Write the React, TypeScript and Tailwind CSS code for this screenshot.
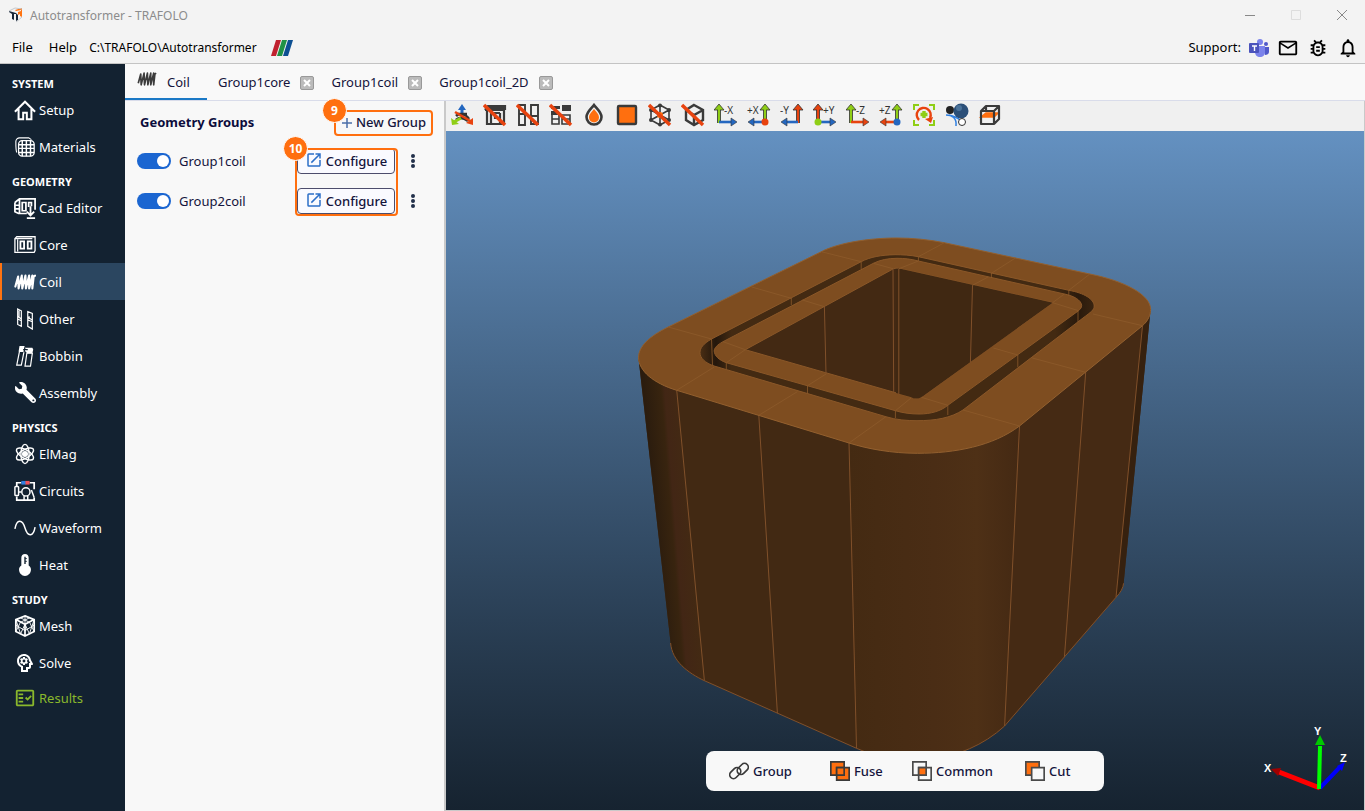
import { useState, type ReactNode } from 'react';
import {
  MdMailOutline,
  MdNotificationsNone,
  MdOpenInNew,
  MdOutlineBugReport,
  MdOutlineFactCheck,
  MdOutlinePsychology,
} from 'react-icons/md';
import { FaWrench } from 'react-icons/fa';

function Icon({ children, className = 'size-[22px]' }: { children: ReactNode; className?: string }) {
  return (
    <svg
      viewBox="0 0 24 24"
      className={className}
      fill="none"
      stroke="currentColor"
      strokeWidth="1.6"
      aria-hidden="true"
    >
      {children}
    </svg>
  );
}

const coilPath = 'M1.500 17L4.500 6L5 19L8.500 5L9 19L12.500 5L13 19L16.500 5L16.500 19L20 5L20 19L21.500 6L23 5';

const icons = {
  setup: (
    <Icon>
      <path d="M1 14 12 3l11 11M5 11v11h5v-7h4v7h5V11" strokeWidth="2.2" />
    </Icon>
  ),
  materials: (
    <Icon>
      <rect x="5" y="5" width="17" height="17" rx="4" strokeWidth="1.4" />
      <path d="M3 18c-1-2-1-9-1-12 0-2 2-4 4-4h10l3 2" strokeWidth="1.2" />
      <path d="M9 5v17M13.500 5v17M18 5v17M5 9.500h17M5 13.500h17M5 18h17" strokeWidth="1.600" />
    </Icon>
  ),
  cad: (
    <Icon className="size-6">
      <path d="M1 6l5-4h17v12M6 2v16M1 6v10l4 2h9M1 9h5M1 13h5" strokeWidth="1.900" />
      <path d="M9 6h4v9H9zM16 11V6h3v4" strokeWidth="1.900" />
      <path d="M18 10v10m-4-4 4 4 4-4M14 23h9" strokeWidth="2" />
    </Icon>
  ),
  core: (
    <Icon>
      <path d="M1 5l2-2h20v15l-1 2H1z" strokeWidth="1.400" />
      <path d="M4 6v13M1 5h19" strokeWidth="1.300" />
      <path d="M7 8h4v8H7zM15 8h4v8h-4z" strokeWidth="2" />
    </Icon>
  ),
  coil: (
    <Icon>
      <path d={coilPath} strokeWidth="2.300" strokeLinecap="round" strokeLinejoin="round" />
    </Icon>
  ),
  other: (
    <Icon>
      <path
        d="M4 1l4 2v17l-4-2zM4 9l4 3M4 12l4 2M5.500 2v8M15 4l5 2v17l-5-3zM15 13l5 2M16.500 12v-3M15 10l5 3"
        strokeWidth="1.300"
      />
    </Icon>
  ),
  bobbin: (
    <Icon>
      <path d="M6 7h5L8 22H3zM14 9h6l-2 14h-6z" strokeWidth="1.300" />
      <path d="M6 1h5l2 2h7l1 2-1 4h-6l-1-2H5z" fill="currentColor" stroke="none" />
      <path d="M10 5l5 0M12 2l-1 6" stroke="#132231" strokeWidth="1.400" />
    </Icon>
  ),
  assembly: <FaWrench className="size-[21px] -scale-x-100" />,
  elmag: (
    <Icon>
      <ellipse cx="12" cy="12" rx="4.500" ry="10.500" />
      <ellipse cx="12" cy="12" rx="4.500" ry="10.500" transform="rotate(60 12 12)" />
      <ellipse cx="12" cy="12" rx="4.500" ry="10.500" transform="rotate(-60 12 12)" />
      <circle cx="12" cy="12" r="2.500" fill="currentColor" />
    </Icon>
  ),
  circuits: (
    <Icon>
      <path d="M8 3H3v4M17 3h5v7M3 18v4h19v-3" strokeWidth="1.900" />
      <rect x="1" y="7" width="4" height="10" rx="1" />
      <circle cx="13" cy="13" r="4.500" />
      <path d="M11 17v5M15 17v5M19 11l3 8M8 13h-3" />
      <path d="M8 3h5" stroke="#2f7fe0" strokeWidth="4" />
      <path d="M12.500 3H17" stroke="#f0525a" strokeWidth="4" />
    </Icon>
  ),
  waveform: (
    <Icon>
      <path d="M1 13C3 2 9 2 12 12s9 10 11-1" strokeWidth="1.600" />
    </Icon>
  ),
  heat: (
    <Icon>
      <path
        d="M12 0c2.500 0 4 1.500 4 4v8.500c1.500 1 2.500 2.500 2.500 4.500 0 4-3 7-6.500 7s-6.500-3-6.500-7c0-2 1-3.500 2.500-4.500V4c0-2.500 1.500-4 4-4z"
        fill="currentColor"
        stroke="none"
      />
      <path d="M12 3v8" stroke="#132231" strokeWidth="1.500" />
      <path d="M12 5h2M12 8h2" stroke="#132231" strokeWidth="1" />
    </Icon>
  ),
  mesh: (
    <Icon className="size-6">
      <path d="M12 1l10 4v13l-10 5-10-5V5zM2 5l10 5 10-5M12 10v13" strokeWidth="1.900" />
      <path
        d="M7 3l10 5M17 3L7 8M12 1v9M2 5l5 15M7 8L2 18M2 11l10 6M12 10l-5 11M22 5l-5 15M17 8l5 10M22 11l-10 6M12 10l5 11"
        strokeWidth="1"
      />
    </Icon>
  ),
  solve: <MdOutlinePsychology className="size-6 shrink-0 -scale-x-100" />,
  results: <MdOutlineFactCheck className="size-[22px]" />,
};

type IconName = keyof typeof icons;

const sections: { title: string; items: [string, IconName][] }[] = [
  { title: 'SYSTEM', items: [['Setup', 'setup'], ['Materials', 'materials']] },
  {
    title: 'GEOMETRY',
    items: [
      ['Cad Editor', 'cad'],
      ['Core', 'core'],
      ['Coil', 'coil'],
      ['Other', 'other'],
      ['Bobbin', 'bobbin'],
      ['Assembly', 'assembly'],
    ],
  },
  {
    title: 'PHYSICS',
    items: [['ElMag', 'elmag'], ['Circuits', 'circuits'], ['Waveform', 'waveform'], ['Heat', 'heat']],
  },
  { title: 'STUDY', items: [['Mesh', 'mesh'], ['Solve', 'solve'], ['Results', 'results']] },
];

function TitleBar() {
  return (
    <div className="flex h-[30px] shrink-0 items-center pl-2 text-[12px] text-[#8c8c8c]">
      <svg viewBox="0 0 16 16" className="size-4" aria-hidden="true">
        <path d="M1 4l7 2v1L6 7v6L4 12V7L1 5z" fill="#17273a" />
        <path d="M8 6l2 2v5l-2 1z" fill="#17273a" />
        <path d="M7 3l7-2v9l-2-1V7l-2 1V5l3-1V3L8 4z" fill="#ff7310" />
        <path d="M1 4l6-3 7 1M14 10l-6 5" stroke="#c5c8cc" fill="none" />
      </svg>
      <span className="ml-[6px] flex-1 pt-[2px]">Autotransformer - TRAFOLO</span>
      <button className="flex h-full w-[46px] items-center justify-center" aria-label="Minimize">
        <svg viewBox="0 0 12 12" className="size-3"><path d="M1 6.500h10" stroke="#888" /></svg>
      </button>
      <button className="flex h-full w-[46px] items-center justify-center" aria-label="Maximize">
        <svg viewBox="0 0 12 12" className="size-3"><path d="M1.500 1.500h9v9h-9z" stroke="#ddd" fill="none" /></svg>
      </button>
      <button className="flex h-full w-[46px] items-center justify-center" aria-label="Close">
        <svg viewBox="0 0 12 12" className="size-3"><path d="M1 1l10 10M11 1L1 11" stroke="#888" /></svg>
      </button>
    </div>
  );
}

function MenuBar() {
  return (
    <div className="flex h-[34px] shrink-0 items-center border-b border-[#c4c4c4] pt-[2px] pr-[6px] pl-3 text-black">
      <button>File</button>
      <button className="ml-4">Help</button>
      <span className="ml-3 text-[12px]">C:\TRAFOLO\Autotransformer</span>
      <svg viewBox="0 0 22 16" className="ml-[14px] h-4 w-[22px]" aria-hidden="true">
        <path d="M5 0h5L5 16H0z" fill="#c0222f" />
        <path d="M11 0h5l-5 16H6z" fill="#209245" />
        <path d="M17 0h5l-5 16h-5z" fill="#0d4f92" />
      </svg>
      <div className="ml-auto flex items-center gap-2">
        <span>Support:</span>
        <button aria-label="Teams">
          <svg viewBox="0 0 20 18" className="h-[18px] w-5" aria-hidden="true">
            <circle cx="17" cy="5" r="2" fill="#5059c9" />
            <path d="M14 8h6v5c0 2-2 3-4 3z" fill="#5059c9" />
            <circle cx="11" cy="3" r="3" fill="#7b83eb" />
            <path d="M6 7h10v6c0 3-2 5-5 5s-5-2-5-5z" fill="#7b83eb" />
            <rect y="4" width="10" height="10" rx="1" fill="#4b53bc" />
            <path d="M3 7h5M5.500 7v5" stroke="#fff" strokeWidth="1.400" />
          </svg>
        </button>
        <button aria-label="Mail"><MdMailOutline className="size-[22px]" /></button>
        <button aria-label="Report a bug"><MdOutlineBugReport className="size-[22px]" /></button>
        <button aria-label="Notifications"><MdNotificationsNone className="size-[22px]" /></button>
      </div>
    </div>
  );
}

function Sidebar() {
  return (
    <nav className="w-[125px] shrink-0 overflow-y-auto bg-[#132231] pt-[3px] text-white">
      {sections.map((section) => (
        <div key={section.title}>
          <h2 className="h-6 pt-[9px] pl-3 text-[11px] leading-[15px] font-bold">{section.title}</h2>
          {section.items.map(([label, icon]) => {
            const active = label === 'Coil';
            return (
              <button
                key={label}
                aria-current={active ? 'page' : undefined}
                className={`flex h-[37px] w-full items-center gap-[3px] border-l-2 pl-3 ${
                  active ? 'border-[#ff7310] bg-[#2b4660]' : 'border-transparent'
                } ${label === 'Results' ? 'pb-1 text-[#8ab82c]' : ''}`}
              >
                <span className="flex w-[22px] items-center justify-center">{icons[icon]}</span>
                <span className="pt-[2px]">{label}</span>
              </button>
            );
          })}
        </div>
      ))}
    </nav>
  );
}

function Tabs() {
  return (
    <div role="tablist" className="flex h-[37px] shrink-0 border-b border-[#d9dcea] bg-[#f9f9f9] text-[#14143c]">
      <button role="tab" aria-selected="true" className="flex w-[82px] items-center border-b-2 border-[#1b79c6] pl-3">
        <Icon className="mb-1 size-5 text-[#3c3c3c]">
          <path d={coilPath} strokeWidth="2" strokeLinejoin="round" />
        </Icon>
        <span className="ml-[10px] pt-[3px]">Coil</span>
      </button>
      {['Group1core', 'Group1coil', 'Group1coil_2D'].map((name) => (
        <div key={name} className="flex items-center pt-[2px] pr-[6px] pl-[11px]">
          <button role="tab" aria-selected="false">{name}</button>
          <button
            aria-label={`Close ${name}`}
            className="ml-[10px] flex size-[14px] items-center justify-center rounded-xs border border-[#999] bg-[#bbb]"
          >
            <svg viewBox="0 0 8 8" className="size-2"><path d="M1 1l6 6M7 1L1 7" stroke="#fff" strokeWidth="2" /></svg>
          </button>
        </div>
      ))}
    </div>
  );
}

function Callout({ n }: { n: number }) {
  return (
    <span className="absolute -top-[14px] -left-[14px] flex size-[25px] items-center justify-center rounded-full border border-white bg-[#ff6f0f] text-[12px] font-bold text-white">
      {n}
    </span>
  );
}

function GroupRow({ name }: { name: string }) {
  const [on, setOn] = useState(true);
  return (
    <div className="flex h-10 items-center">
      <label className="flex items-center gap-2 text-[#14143c]">
        <input
          type="checkbox"
          role="switch"
          checked={on}
          onChange={() => setOn(!on)}
          className="flex h-4 w-[34px] appearance-none items-center rounded-full bg-[#b0b0b0] px-[2px] before:size-3 before:rounded-full before:bg-white checked:justify-end checked:bg-[#1b66d1]"
        />
        <span className="pt-[2px]">{name}</span>
      </label>
      <button className="ml-auto flex h-[26px] w-[98px] items-center justify-center gap-[3px] rounded border border-[#4d4d6c] bg-[#fafaff] font-medium text-[#14143c]">
        <MdOpenInNew className="mb-[2px] size-[18px] text-[#2c6fc8]" />
        <span className="pt-[2px]">Configure</span>
      </button>
      <button aria-label={`${name} options`} className="ml-2 flex h-6 w-5 items-center justify-center">
        <svg viewBox="0 0 4 16" className="h-4 w-1" fill="#22304a">
          <circle cx="2" cy="3" r="2" />
          <circle cx="2" cy="8" r="2" />
          <circle cx="2" cy="13" r="2" />
        </svg>
      </button>
    </div>
  );
}

function GroupsPanel() {
  return (
    <aside className="w-[321px] shrink-0 border-r-2 border-[#c9c9c9] bg-[#f8f8f8] pr-[21px] pl-3">
      <div className="-mr-[10px] flex h-10 items-center justify-between pt-1 pl-[3px]">
        <h1 className="font-bold text-[#0c0c3c]">Geometry Groups</h1>
        <div className="relative rounded border-2 border-[#ff6f0f]">
          <button className="flex h-[22px] items-center gap-[3px] px-[5px] font-medium text-[#14143c]">
            <svg viewBox="0 0 12 12" className="size-3"><path d="M6 1v10M1 6h10" stroke="#4a6ea8" strokeWidth="1.500" /></svg>
            New Group
          </button>
          <Callout n={9} />
        </div>
      </div>
      <div className="relative">
        <GroupRow name="Group1coil" />
        <GroupRow name="Group2coil" />
        <div className="pointer-events-none absolute top-[7px] right-[25px] h-[68px] w-[103px] rounded border-2 border-[#ff6f0f]">
          <Callout n={10} />
        </div>
      </div>
    </aside>
  );
}

const slash = <path d="M1 2l21 20" stroke="#e8430f" strokeWidth="3.400" />;

// Two-arrow gizmos: the upright arrow sits left or right and the flat one points away from it.
function ViewIcon({ label, flip, up, flat, dot }: { label: string; flip?: boolean; up: string; flat: string; dot?: string }) {
  const x = flip ? 18 : 5;
  return (
    <svg viewBox="0 0 24 24" className="size-6" aria-hidden="true">
      <path d={`M${x} 20V5`} stroke="#333" strokeWidth="3.800" />
      <path d={`M${x - 5} 7l5-6 5 6z`} fill={up} stroke="#333" strokeWidth=".8" />
      <path d={`M${x} 20V5`} stroke={up} strokeWidth="2.200" />
      <path d={flip ? 'M18 19H6' : 'M5 19h13'} stroke={flat} strokeWidth="2.600" />
      <path d={flip ? 'M7 15l-6 4 6 4z' : 'M17 15l6 4-6 4z'} fill={flat} stroke="#333" strokeWidth=".6" />
      {dot && <circle cx={x} cy="19" r="3.500" fill={dot} />}
      <text x={flip ? 0 : 10} y="11" fontSize="10" fill="#333" fontFamily="Noto Sans, sans-serif">
        {label}
      </text>
    </svg>
  );
}

const green = '#8fce16';
const blue = '#2467c0';
const red = '#e8430f';

const tools: { name: string; icon: ReactNode }[] = [
  {
    name: 'Hide axes',
    icon: (
      <Icon className="size-6">
        <path d="M12 13V5" stroke={blue} strokeWidth="3" />
        <path d="M8 7l4-6 4 6z" fill={blue} stroke="none" />
        <path d="M6 13c3-3 9-3 13 3M6 17c3-3 7-3 12 1M8 11l9 0" stroke="#333" strokeWidth="2.500" />
        <path d="M11 15l-7 4" stroke={green} strokeWidth="3" />
        <path d="M1 15l1 7 7-1z" fill={green} stroke="none" />
        <path d="M5 9l17 10" stroke={red} strokeWidth="2.600" />
        <path d="M23 15l0 7-7-2z" fill={red} stroke="none" />
      </Icon>
    ),
  },
  {
    name: 'Hide core',
    icon: (
      <Icon className="size-6">
        <path d="M2 7l3-4h17v4M2 7h20M4 7v14h17V7M8 10v11M12 10v6M17 10v11M8 10h9M5 5h17" stroke="#3a3a3a" strokeWidth="2.200" />
        {slash}
      </Icon>
    ),
  },
  {
    name: 'Hide other parts',
    icon: (
      <Icon className="size-6">
        <path d="M3 2h6v20H3zM15 2h7v19h-7zM3 11h6M15 13h7" stroke="#3a3a3a" strokeWidth="1.900" />
        {slash}
      </Icon>
    ),
  },
  {
    name: 'Hide bobbin',
    icon: (
      <Icon className="size-6">
        <path d="M3 11h7v10H3zM13 12h8v9h-8zM3 16h7M13 16h8" stroke="#3a3a3a" />
        <path d="M2 3h9v3H2zM13 2h9v6h-9zM2 8h8v4H2z" fill="#3a3a3a" stroke="none" />
        {slash}
      </Icon>
    ),
  },
  {
    name: 'Opacity',
    icon: (
      <Icon className="size-6">
        <path d="M12 2c-3 4-7.500 7-7.500 12a7.500 7.500 0 0015 0c0-5-4.500-8-7.500-12z" stroke="#3a3a3a" strokeWidth="2.600" />
        <path d="M12 6c-2 3-5 5-5 8.500a5 5 0 0010 0c0-3.500-3-5.500-5-8.500z" fill="#ff6f0f" stroke="none" />
      </Icon>
    ),
  },
  {
    name: 'Surface',
    icon: (
      <Icon className="size-6">
        <rect x="3" y="3" width="18" height="18" rx="1" fill="#ff6f0f" stroke="#3a3a3a" strokeWidth="2.400" />
      </Icon>
    ),
  },
  {
    name: 'Hide mesh',
    icon: (
      <Icon className="size-6">
        <path d="M12 2l9 5v10l-9 5-9-5V7zM3 7l9 5 9-5M12 2v20M3 17l9-5 9 5M3 7v10M21 7v10" stroke="#3a3a3a" />
        <g fill="#3a3a3a" stroke="none">
          <circle cx="12" cy="2.500" r="2" />
          <circle cx="3" cy="7" r="2" />
          <circle cx="21" cy="7" r="2" />
          <circle cx="3" cy="17" r="2" />
          <circle cx="21" cy="17" r="2" />
          <circle cx="12" cy="21.500" r="2" />
        </g>
        <circle cx="12" cy="12" r="3" fill="#ff6f0f" stroke="none" />
        {slash}
      </Icon>
    ),
  },
  {
    name: 'Hide box',
    icon: (
      <Icon className="size-6">
        <path d="M13 2l9 5v10l-9 5-8-5V7zM5 7l8 5 9-5M13 12v10" stroke="#3a3a3a" strokeWidth="2.400" />
        {slash}
      </Icon>
    ),
  },
  { name: 'View -X', icon: <ViewIcon label="-X" up={green} flat={blue} /> },
  { name: 'View +X', icon: <ViewIcon label="+X" flip up={green} flat={blue} dot={red} /> },
  { name: 'View -Y', icon: <ViewIcon label="-Y" flip up={red} flat={blue} /> },
  { name: 'View +Y', icon: <ViewIcon label="+Y" up={red} flat={blue} dot={green} /> },
  { name: 'View -Z', icon: <ViewIcon label="-Z" up={green} flat={red} /> },
  { name: 'View +Z', icon: <ViewIcon label="+Z" flip up={green} flat={red} dot={blue} /> },
  {
    name: 'Fit to view',
    icon: (
      <Icon className="size-6">
        <path d="M2 7V2h5M17 2h5v5M22 17v5h-5M7 22H2v-5" stroke={green} strokeWidth="2" />
        <path d="M7 17a7 7 0 1111-2" stroke={red} strokeWidth="2.400" />
        <path d="M13 16l8-2-2 6z" fill={red} stroke="none" />
        <path d="M12 8v7M8.500 11.500h7" stroke={green} strokeWidth="3.400" />
      </Icon>
    ),
  },
  {
    name: 'Parts',
    icon: (
      <Icon className="size-6">
        <path d="M1 12c6 0 11 3 10 11M4 12c5 1 9 3 12 6" stroke="#2f7fe0" strokeWidth="1.500" />
        <circle cx="5" cy="7" r="4" fill="#222" stroke="none" />
        <circle cx="16" cy="8" r="7.500" fill="#2b4f78" stroke="none" />
        <circle cx="14" cy="5" r="3" fill="#4a7299" stroke="none" />
        <circle cx="17" cy="19" r="3.500" fill="#fff" stroke="#333" strokeWidth="1" />
      </Icon>
    ),
  },
  {
    name: 'Section',
    icon: (
      <Icon className="size-6">
        <path d="M3 14l5-4h12l-4 4z" fill="#ff6f0f" stroke="#ff6f0f" />
        <path d="M3 8h13v13H3zM3 8l5-5h13l-5 5M21 3v13l-5 5M8 3v5" stroke="#3a3a3a" strokeWidth="2.200" strokeLinejoin="round" />
      </Icon>
    ),
  },
];

function CoilModel() {
  return (
    <svg viewBox="446 131 918 679" className="h-full w-full" role="img" aria-label="Coil geometry">
      <defs>
        <linearGradient id="leftRound" gradientUnits="userSpaceOnUse" x1="654" x2="692" y1="520" y2="517">
          <stop offset="0" stopColor="#2b1c0e" />
          <stop offset=".45" stopColor="#38240f" />
          <stop offset=".55" stopColor="#422615" />
          <stop offset="1" stopColor="#432a13" />
        </linearGradient>
        <linearGradient id="frontRound" x1="0" x2="1">
          <stop offset="0" stopColor="#442a12" />
          <stop offset=".5" stopColor="#4a2d15" />
          <stop offset=".75" stopColor="#4e3016" />
          <stop offset="1" stopColor="#442913" />
        </linearGradient>
        <linearGradient id="gapRound" x1="0" x2="1">
          <stop offset="0" stopColor="#4a2e14" />
          <stop offset=".04" stopColor="#24170c" />
          <stop offset=".08" stopColor="#432a12" />
          <stop offset=".9" stopColor="#432a12" />
          <stop offset=".96" stopColor="#2a1a0c" />
          <stop offset="1" stopColor="#3a2410" />
        </linearGradient>
      </defs>

      {/* side walls */}
      <path
        d="M638.500 358L670.600 643C672 661 688 673 704.400 680.700L856.500 748.300C900 768 962 765 1004.600 726L1116 597.300Q1123 590 1123.600 583.300L1150.600 309L900 300z"
        fill="#422913"
      />
      <path d="M638.500 358L670.600 643C672 661 688 673 704.400 680.700L676.700 390z" fill="url(#leftRound)" />
      <path d="M849 443L856.500 748.300C900 768 962 765 1004.600 726L1019.500 426z" fill="url(#frontRound)" />
      <path d="M1019.500 426L1004.600 726L1116 597.300L1142.500 325.700z" fill="#452a14" />
      <path d="M1142.500 325.700L1116 597.300Q1123 590 1123.600 583.300L1150.600 309z" fill="#36210f" />
      <g fill="none" stroke="#80502a">
        <path d="M676.700 390L704.400 680.700M758.800 415.300L777.400 713.300M849 443L856.500 748.300M1019.500 426L1004.600 726M1085.700 372.300L1064.400 657.300M1142.500 325.700L1116 597.300" />
        <path d="M670.600 643C672 661 688 673 704.400 680.700L856.500 748.300C900 768 962 765 1004.600 726L1116 597.300Q1123 590 1123.600 583.300" />
      </g>

      {/* outer ring */}
      <path
        d="M821.300 251.700L668.200 327C650 336 638.500 346 638.500 357.700C639 371 653 383 676.700 390.300L849 443C868 449 892 453.300 917.400 453.300C955 453.300 993 446 1019.500 426L1142.500 325.700C1148 321 1150.600 315 1150.600 309.300C1150.600 295 1125 281 1089.800 274L944.400 242.700C928 239.500 912 238 897 238C868 238 838 243 821.300 251.700z"
        fill="#7e4d20"
        stroke="#93602f"
      />
      <path
        d="M861.200 261.700L711.500 339C703 344 700 348 700 352.700C700 358 705 363 714.200 366L885.900 416.700C896 420 908 420.700 917 420.700C935 420.700 951 418 963 410L1083 318C1091 312 1094.200 310 1094.200 306C1094 299 1084 293 1068.800 290.300L918.400 256.700C910 255 902 254.700 895 254.700C881 255 870 257 861.200 261.700z"
        fill="url(#gapRound)"
        stroke="#8a5728"
      />
      {/* inner ring */}
      <path
        d="M873.400 263.300L723 341.700C717 345 714.200 348 714.200 351C714.500 356 719 360 726.300 362.700L895.400 410.700C903 413 911 414 919 414C931 414 941 411 947.800 405.300L1078.600 310.700Q1082 308 1081.700 305.300C1081 300 1074 296 1064.400 294L918.400 261C911 259 904 258.300 897 258.300C888 258.300 880 260 873.400 263.300z"
        fill="#7e4d20"
        stroke="#8a5728"
      />
      <path d="M745.300 349.700L893 269Q896 267.500 899 268.500L1052.600 302.700L921.400 397.300Q916 400 910.600 397z" fill="#432913" stroke="#8a5728" />
      <path d="M896 269L899 268.500L1052.600 302.700L921.400 397.300Q916 400 910.600 397L896 393z" fill="#402812" />
      <path
        d="M824.400 306.700L826 373.700M893 269.500L893.700 392.500M898.800 269L898.800 394M972.500 285.300L970.400 362.700"
        stroke="#80502a"
      />
      <g stroke="#8d5a2b" strokeWidth=".8">
        <path d="M821.300 251.700L861.200 261.700M751.700 287L791.300 298.300M668.200 327L711.500 339M676.700 390.300L714.200 367M758.800 415.300L797.300 391.700M849 443L885.900 416.700M1019.500 426L963 410M1085.700 372.300L1032.300 358M1142.500 325.700L1093 314M1089.800 274L1068.800 290.300M1015.400 258L991.400 273.300M944.400 242.700L918.400 256.700" />
        <path d="M873.400 263.300L893 268.700M802.400 300L824.400 306.700M723 341.700L745.300 349.700M726.300 362.700L745.300 349.700M807.500 385.700L826 374M895.400 410.700L911 398M947.800 405.300L921.400 397.300M1017.800 355L993.400 348M1078.600 310.700L1052.600 302.700M1064.400 294L1052.600 302.700M988 277L972.500 285.300M918.400 261L899 268.700" />
        <path d="M861.200 262V269M791.300 298V305M711.500 339L712.500 365M726.300 363V369M807.500 386V393M895.400 411V418M947.800 405V415M1017.800 355V367M1078 311V322M1068.800 290V296M991.400 273V278M918.400 257V261" />
      </g>
    </svg>
  );
}

function AxisTriad() {
  return (
    <svg viewBox="0 0 100 70" className="absolute right-[7px] bottom-[14px] h-[70px] w-[100px]" aria-hidden="true">
      <path d="M63 62L22 46" stroke="#f00" strokeWidth="5" />
      <path d="M14 43l10-1-3 8z" fill="#a00000" />
      <path d="M63 62L83 41" stroke="#0000fa" strokeWidth="4" />
      <path d="M80 40l8-4-3 9z" fill="#0000fa" />
      <path d="M62 63L63 20" stroke="#0f0" strokeWidth="4" />
      <path d="M58 19l5-10 5 10z" fill="#00c800" />
      <g fill="#fff" fontSize="11" fontWeight="bold" fontFamily="Liberation Sans, Arial, sans-serif">
        <text x="7" y="46">X</text>
        <text x="57" y="9">Y</text>
        <text x="83" y="36">Z</text>
      </g>
    </svg>
  );
}

const booleanOps: { name: string; width: string; icon: ReactNode }[] = [
  {
    name: 'Group',
    width: 'w-[101px]',
    icon: (
      <g stroke="#3a3a3a" strokeWidth="2">
        <rect x="0" y="10" width="15" height="9" rx="4.500" transform="rotate(-45 7.500 14.500)" />
        <rect x="9" y="5" width="15" height="9" rx="4.500" transform="rotate(-45 16.500 9.500)" />
      </g>
    ),
  },
  {
    name: 'Fuse',
    width: 'w-[82px]',
    icon: (
      <g fill="#ff6f0f" stroke="#3a3a3a" strokeWidth="2">
        <path d="M1 1h16v16H1z" />
        <path d="M8 8h15v15H8z" />
        <path d="M8 8h9v9H8z" />
      </g>
    ),
  },
  {
    name: 'Common',
    width: 'w-[113px]',
    icon: (
      <g stroke="#4a4a4a" strokeWidth="2">
        <path d="M1 1h16v16H1z" />
        <path d="M8 8h15v15H8z" />
        <path d="M8 8h9v9H8z" fill="#ff6f0f" />
      </g>
    ),
  },
  {
    name: 'Cut',
    width: 'w-[79px]',
    icon: (
      <g stroke="#4a4a4a" strokeWidth="2">
        <path d="M1 1h16v16H1z" fill="#ff6f0f" />
        <path d="M8 8h15v15H8z" fill="#f8f8f8" />
      </g>
    ),
  },
];

export default function App() {
  return (
    <div className="flex h-screen flex-col bg-[#f3f3f3] font-['Noto_Sans','Open_Sans',sans-serif] text-[13px]">
      <TitleBar />
      <MenuBar />
      <div className="flex min-h-0 flex-1">
        <Sidebar />
        <main className="flex min-w-0 flex-1 flex-col">
          <Tabs />
          <div className="flex min-h-0 flex-1">
            <GroupsPanel />
            <section className="flex min-w-0 flex-1 flex-col border-r border-b border-[#c9c9c9]">
              <div role="toolbar" className="flex h-[30px] shrink-0 items-center bg-[#f0f0f0] pb-[2px]">
                {tools.map((tool) => (
                  <button key={tool.name} aria-label={tool.name} className="flex w-[33px] justify-center pr-[2px]">
                    {tool.icon}
                  </button>
                ))}
              </div>
              <div className="relative min-h-0 flex-1 bg-linear-to-b from-[#6491c1] to-[#162330]">
                <CoilModel />
                <AxisTriad />
                <div className="absolute bottom-[19px] left-1/2 flex h-10 w-[398px] -translate-x-1/2 items-center rounded-lg bg-[#f8f8f8] pl-[23px]">
                  {booleanOps.map((op) => (
                    <button key={op.name} className={`flex items-center gap-1 font-medium text-[#14143c] ${op.width}`}>
                      <Icon className="size-5">{op.icon}</Icon>
                      <span className="pt-[2px]">{op.name}</span>
                    </button>
                  ))}
                </div>
              </div>
            </section>
          </div>
        </main>
      </div>
    </div>
  );
}
